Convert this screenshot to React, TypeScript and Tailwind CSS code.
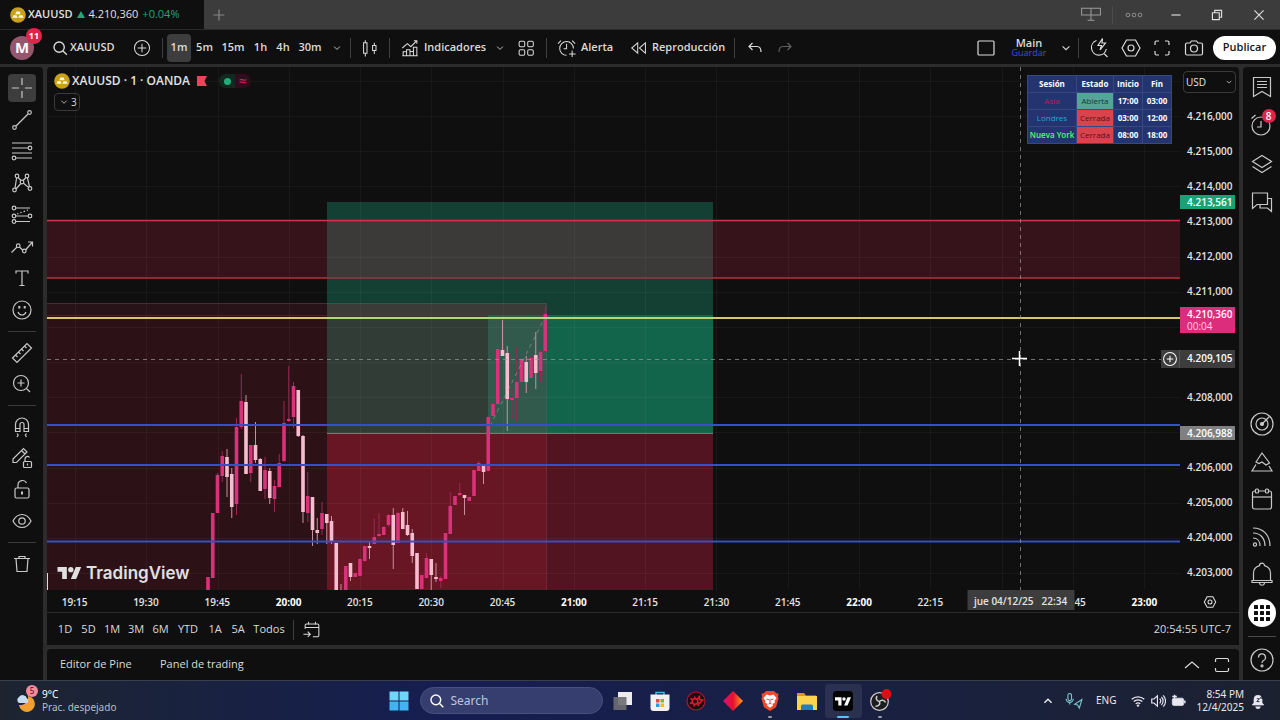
import React from "react";

const PRICE_TOP = 4216;
const PRICE_TOP_Y = 49;
const PX_PER_POINT = 35.15;
const PLOT_W = 1133;
const PLOT_H = 523;

// percentage from the top of the plot for a price
const priceToPct = (price: number) =>
    ((PRICE_TOP_Y + (PRICE_TOP - price) * PX_PER_POINT) / PLOT_H) * 100;

// [up, wick top, body top, body bottom, wick bottom], one per minute
const candles: [number, number, number, number, number][] = [
    [1, 577, 577, 590, 590], [1, 513, 513, 578, 578], [1, 473, 475, 513, 513], [1, 451, 456, 476, 482],
    [0, 449, 457, 477, 497], [0, 468, 474, 507, 518], [1, 418, 427, 504, 515], [1, 374, 401, 427, 429],
    [0, 395, 402, 474, 474], [1, 445, 445, 473, 482], [0, 422, 445, 460, 463], [0, 458, 459, 491, 491],
    [1, 457, 470, 489, 499], [0, 468, 471, 498, 504], [1, 480, 486, 499, 512], [1, 454, 463, 487, 487],
    [1, 401, 423, 461, 462], [1, 366, 419, 421, 422], [1, 382, 386, 417, 428], [0, 390, 390, 436, 437],
    [0, 435, 436, 512, 523], [1, 472, 496, 513, 522], [0, 497, 497, 530, 546], [0, 518, 530, 533, 544],
    [1, 502, 513, 529, 535], [0, 514, 514, 523, 544], [0, 516, 521, 542, 544], [0, 543, 543, 590, 590],
    [0, 584, 590, 590, 590], [1, 566, 566, 590, 590], [0, 563, 563, 577, 581], [1, 573, 573, 577, 577],
    [1, 558, 559, 576, 576], [1, 546, 546, 561, 562], [0, 542, 546, 548, 559], [1, 518, 537, 544, 544],
    [1, 513, 534, 536, 537], [1, 526, 527, 535, 535], [1, 514, 515, 525, 527], [0, 508, 515, 545, 569],
    [1, 512, 513, 543, 543], [0, 508, 512, 529, 529], [0, 511, 525, 535, 536], [0, 529, 533, 556, 563],
    [0, 553, 553, 589, 589], [1, 575, 575, 589, 589], [1, 553, 558, 578, 578], [0, 559, 559, 575, 590],
    [0, 563, 577, 579, 582], [1, 576, 578, 581, 588], [1, 533, 533, 579, 579], [1, 492, 506, 534, 534],
    [1, 496, 496, 505, 505], [1, 483, 493, 495, 496], [0, 495, 495, 498, 515], [1, 497, 497, 501, 501],
    [1, 470, 470, 496, 496], [1, 461, 463, 471, 471], [0, 464, 465, 472, 484], [1, 416, 417, 471, 471],
    [1, 404, 404, 416, 416], [1, 348, 349, 404, 404], [0, 320, 350, 356, 356], [0, 346, 353, 399, 431],
    [1, 388, 398, 400, 419], [1, 347, 382, 398, 422], [1, 347, 359, 382, 387], [0, 356, 362, 382, 393],
    [1, 356, 358, 378, 378], [0, 332, 355, 373, 389], [1, 350, 352, 371, 382], [1, 306, 314, 351, 351],
];

// empty entries are the ticks that sit under the crosshair and price labels
const times = [
    "19:15", "19:30", "19:45", "20:00", "20:15", "20:30", "20:45", "21:00",
    "21:15", "21:30", "21:45", "22:00", "22:15", "", "22:45", "23:00",
];

const prices = [
    "4.216,000", "4.215,000", "4.214,000", "4.213,000", "4.212,000", "4.211,000", "", "",
    "4.208,000", "", "4.206,000", "4.205,000", "4.204,000", "4.203,000",
];

const sessions = [
    { name: "Asia", color: "text-[#b3264f]", open: true, start: "17:00", end: "03:00" },
    { name: "Londres", color: "text-[#22a8d4]", open: false, start: "03:00", end: "12:00" },
    { name: "Nueva York", color: "text-[#4dff6a] font-semibold", open: false, start: "08:00", end: "18:00" },
];

interface IconProps {
    children: React.ReactNode;
    className?: string;
}

const Icon: React.FC<IconProps> = ({ children, className = "size-7" }) => (
    <svg
        viewBox="0 0 28 28"
        fill="none"
        stroke="currentColor"
        strokeWidth="1.2"
        className={`shrink-0 ${className}`}
        aria-hidden="true"
    >
        {children}
    </svg>
);

const Chevron = ({ className = "size-7" }: { className?: string }) => (
    <Icon className={className}>
        <path d="M10 12l4 4 4-4" />
    </Icon>
);

const Divider = () => <div className="h-5 w-px shrink-0 bg-[#404040]" />;

const GoldBadge = () => (
    <svg viewBox="0 0 16 16" className="size-4 shrink-0" aria-hidden="true">
        <circle cx="8" cy="8" r="7.8" fill="#c9a01c" />
        <path d="M6.3 4.6h3.4l1 2.6H5.3zM3.4 8.2h3.3l1 2.6H2.4zM9.3 8.2h3.3l1 2.6H8.3z" fill="#fff6d8" />
    </svg>
);

const TvMark = ({ className }: { className: string }) => (
    <svg viewBox="0 0 36 18" fill="currentColor" className={className} aria-hidden="true">
        <path d="M14 18H7V7H0V0h14zM28 18h-8l7.5-18h8z" />
        <circle cx="20" cy="4" r="4" />
    </svg>
);

const drawingTools: { label: string; icon: React.ReactNode }[][] = [
    [
        { label: "Cruz", icon: <path d="M14 4v7M14 17v7M4 14h7M17 14h7" /> },
        {
            label: "Línea de tendencia",
            icon: <><circle cx="6.5" cy="21.5" r="1.8" /><circle cx="21.5" cy="6.5" r="1.8" /><path d="M8 20L20 8" /></>,
        },
        {
            label: "Retroceso de Fibonacci",
            icon: <><path d="M4 6h20M4 11h16M4 16h20M8 21h16" /><circle cx="22" cy="11" r="1.8" /><circle cx="6" cy="21" r="1.8" /></>,
        },
        {
            label: "Patrón XABCD",
            icon: <><circle cx="6.5" cy="21" r="1.8" /><circle cx="9" cy="7" r="1.8" /><circle cx="14" cy="13" r="1.8" /><circle cx="19" cy="7" r="1.8" /><circle cx="22" cy="19.5" r="1.8" /><path d="M7 19L8.6 9M10.2 8.5l2.6 3M15.2 11.5l2.7-3M19.5 9l2 8.7M8 20l4.8-5.5M15.5 14.2l5 4.2" /></>,
        },
        {
            label: "Posición y previsión",
            icon: <><circle cx="6" cy="7" r="1.8" /><path d="M8 7h14M8 15h12M8 20.5h14" /><circle cx="6" cy="15" r="1.8" /><circle cx="22" cy="15" r="1.8" /><circle cx="6" cy="20.5" r="1.8" /><path d="M9 13l11-4" strokeDasharray="1.5 2" /></>,
        },
        {
            label: "Formas",
            icon: <><path d="M3.5 19.5l5.5-5.5M11.5 14l3.5 3.5M17.5 17l7-8M20 9h4.5v4.5" /><circle cx="10.2" cy="12.7" r="1.8" /><circle cx="16.3" cy="18" r="1.8" /></>,
        },
        { label: "Texto", icon: <path d="M8 9.5V7h12v2.5M14 7v14M11.5 21.5h5" /> },
        {
            label: "Iconos",
            icon: <><circle cx="14" cy="14" r="9" /><path d="M10 16c.8 2 2.2 3 4 3s3.2-1 4-3" /><path d="M11.3 10v2.5M16.7 10v2.5" strokeWidth="2" /></>,
        },
    ],
    [
        {
            label: "Medida",
            icon: <path d="M4.5 19L19 4.5l4.5 4.5L9 23.5zM7.5 16l2 2M10.5 13l2 2M13.5 10l2 2M16.5 7l2 2" />,
        },
        {
            label: "Acercar",
            icon: <><circle cx="13" cy="13" r="7.5" /><path d="M13 9.5v7M9.500 13h7M18.5 18.5l3.500 3.500" /></>,
        },
    ],
    [
        {
            label: "Imán",
            icon: <path d="M7.5 18.5v-7a6.5 6.5 0 0 1 13 0v7H16v-7a2 2 0 0 0-4 0v7zM7.5 15.500H12M16 15.500h4.500M9 20.5l1.2 1.5L9 24M18.5 20.5L17.300 22l1.200 2" />,
        },
        {
            label: "Modo dibujo",
            icon: <><path d="M5 15L15.5 4.5 19 8 8.500 18.500H5zM13.500 6.500L17 10" /><rect x="15.5" y="17.5" width="8" height="6" rx="1" /><path d="M17 17.500V15a2.500 2.500 0 0 1 4.500-1.500M19.500 19.500v2" /></>,
        },
        {
            label: "Bloquear",
            icon: <><rect x="7" y="12" width="14" height="10" rx="1.5" /><path d="M10 12V9a4.500 4.500 0 0 1 8.500-2" /><path d="M14 15.500v3" strokeWidth="2" /></>,
        },
        {
            label: "Ocultar",
            icon: <><path d="M5 14c2-4 5.500-6.500 9-6.500s7 2.500 9 6.500c-2 4-5.500 6.500-9 6.500S7 18 5 14z" /><circle cx="14" cy="14" r="3.2" /></>,
        },
    ],
    [
        {
            label: "Eliminar",
            icon: <path d="M6 8.500h16M11 8.500v-2h6v2M8 8.500l1 13h10l1-13" />,
        },
    ],
];

const groupHeights = ["h-[250px]", "h-[59px]", "h-[122px]", "h-7"];

const LeftToolbar = () => (
    <nav className="flex w-[43px] shrink-0 flex-col items-center rounded-tr bg-[#0f0f0f] pt-[7px] text-[#c8c8c8]">
        {drawingTools.map((group, g) => (
            <React.Fragment key={g}>
                {g > 0 && <div className="my-[7px] h-px w-7 shrink-0 bg-[#3a3a3a]" />}
                <div className={`flex flex-col justify-between ${groupHeights[g]}`}>
                    {group.map((tool, i) => (
                        <button
                            key={tool.label}
                            aria-label={tool.label}
                            className={`flex size-7 items-center justify-center rounded ${g === 0 && i === 0 ? "bg-[#3d3d3d]" : ""}`}
                        >
                            <Icon>{tool.icon}</Icon>
                        </button>
                    ))}
                </div>
            </React.Fragment>
        ))}
    </nav>
);

const RailButton = ({ label, children, badge }: { label: string; children: React.ReactNode; badge?: string }) => (
    <button aria-label={label} className="relative flex size-8 items-center justify-center">
        <Icon>{children}</Icon>
        {badge && (
            <span className="absolute top-0 right-0.5 flex size-3.5 items-center justify-center rounded-full bg-[#e0244c] text-[10px] font-semibold text-white">
                {badge}
            </span>
        )}
    </button>
);

const RightRail = () => (
    <aside className="flex w-[37px] shrink-0 flex-col items-center rounded-tl bg-[#0f0f0f] pt-1 pb-1 text-[#c8c8c8]">
        <div className="flex h-[147px] flex-col justify-between">
            <RailButton label="Lista de seguimiento">
                <path d="M5.5 4.5h17v19L14 18.500l-8.500 5zM9 8.500h10M9 11.500h10M9 14.500h10" />
            </RailButton>
            <RailButton label="Alertas" badge="8">
                <circle cx="13" cy="15" r="9" /><path d="M13 10v6H9M3.500 7.500l4-3.500" />
            </RailButton>
            <RailButton label="Árbol de objetos">
                <path d="M14 5.500l9.500 6-9.500 6-9.500-6zM4.500 16.500l9.500 6 9.500-6" />
            </RailButton>
            <RailButton label="Chats">
                <path d="M4.500 5h15v11.500H9l-4.500 4zM19.500 10.500h4v13L19.500 20H12v-3.500" />
            </RailButton>
        </div>
        <div className="flex-1" />
        <div className="flex h-[221px] flex-col justify-between">
            <RailButton label="Filtros">
                <circle cx="14" cy="14" r="11" /><circle cx="14" cy="14" r="6" /><circle cx="14" cy="14" r="1.500" fill="currentColor" /><path d="M14 14l7.500-7.500" />
            </RailButton>
            <RailButton label="Pine">
                <path d="M8 14L14 5l7.500 10-3.500 2-4-3-3 1.500zM8 16.500L4 23h20l-3-5" />
            </RailButton>
            <RailButton label="Calendario">
                <rect x="4.5" y="5" width="19" height="18" rx="2" /><path d="M4.500 11h19" /><rect x="7.5" y="3" width="3" height="4" rx="1" fill="#0f0f0f" /><rect x="17.5" y="3" width="3" height="4" rx="1" fill="#0f0f0f" />
            </RailButton>
            <RailButton label="Noticias">
                <path d="M5 5c10 0 17 7 17 18M5 10c7 0 12 5 12 13M5 15c4 0 7 3 7 8" /><circle cx="7" cy="21.5" r="1.6" />
            </RailButton>
            <RailButton label="Notificaciones">
                <path d="M4 21.500h20v-2h-1.500v-7a8 8 0 0 0-6-7.800 2.500 2.500 0 0 0-5 0 8 8 0 0 0-6 7.800v7H4zM5.500 19.500h17M11.500 22c.5 3 4.500 3 5 0" />
            </RailButton>
            <button aria-label="Productos" className="grid size-8 place-items-center">
                <span className="grid size-7 shrink-0 place-items-center rounded-full bg-white">
                    <svg viewBox="0 0 16 16" className="size-4" aria-hidden="true">
                        {[0, 6, 12].map((y) => [0, 6, 12].map((x) => (
                            <rect key={`${x}-${y}`} x={x} y={y} width="4" height="4" rx="0.6" fill="#0f0f0f" />
                        )))}
                    </svg>
                </span>
            </button>
        </div>
        <div className="my-[7px] h-px w-7 bg-[#4a4a4a]" />
        <RailButton label="Ayuda">
            <circle cx="14" cy="14" r="11" /><path d="M10.500 11.500a3.500 3.500 0 1 1 5 3c-1 .6-1.500 1-1.500 2.500" /><circle cx="14" cy="19.8" r="1" />
        </RailButton>
    </aside>
);

const TitleBar = () => (
    <div className="flex h-[29px] shrink-0 bg-[#3c3c3c] text-[#c0c0c0]">
        <div className="flex w-[204px] items-center bg-[#0f0f0f] pl-2.5 text-[11px] whitespace-nowrap text-[#e0e0e0]">
            <GoldBadge />
            <span className="ml-0.5 font-semibold">XAUUSD</span>
            <span className="ml-1 h-0 w-0 border-x-4 border-b-[7px] border-x-transparent border-b-[#22a67a]" />
            <span className="ml-1">4.210,360</span>
            <span className="ml-1 text-[#22a67a]">+0.04%</span>
        </div>
        <button aria-label="Nueva pestaña" className="w-[29px] text-[#8a8a8a]">
            <Icon className="mx-auto size-4"><path d="M14 4.500v19M4.500 14h19" strokeWidth="2" /></Icon>
        </button>
        <div className="flex-1" />
        <button aria-label="Ventanas" className="w-[42px] text-[#9a9a9a]">
            <Icon className="mx-auto size-6"><path d="M3 6h22v8H3zM14 6v14M10 20h8" /></Icon>
        </button>
        <div className="mt-1.5 h-[18px] w-px bg-[#4c4c4c]" />
        <button aria-label="Más" className="w-[42px] text-[#9a9a9a]">
            <Icon className="mx-auto size-5"><circle cx="5.5" cy="14" r="2.6" /><circle cx="14" cy="14" r="2.6" /><circle cx="22.5" cy="14" r="2.6" /></Icon>
        </button>
        <button aria-label="Minimizar" className="w-[41px] text-[#e0e0e0]">
            <Icon className="mx-auto size-4"><path d="M6 14h16" strokeWidth="2" /></Icon>
        </button>
        <button aria-label="Restaurar" className="w-[42px] text-[#e0e0e0]">
            <Icon className="mx-auto size-4"><path d="M6 10h12v12H6zM10 10V6h12v12h-4" strokeWidth="2" /></Icon>
        </button>
        <button aria-label="Cerrar" className="w-[42px] text-[#e0e0e0]">
            <Icon className="mx-auto size-4"><path d="M6 6l16 16M22 6L6 22" strokeWidth="2" /></Icon>
        </button>
    </div>
);

const TopToolbar = () => (
    <header className="flex h-[35px] shrink-0 items-center border-t border-[#2a2a2a] bg-[#0f0f0f] pt-px text-[11px] font-semibold whitespace-nowrap text-[#dbdbdb]">
        <button aria-label="Menú de usuario" className="relative ml-2.5 flex size-6 items-center justify-center rounded-full bg-[#96566e] text-[15px] font-bold text-white">
            M
            <span className="absolute -top-2 left-4 flex size-4 items-center justify-center rounded-full bg-[#e0244c] text-[9px]">11</span>
        </button>
        <button className="ml-3.5 flex w-[72px] items-center">
            <Icon className="size-6"><circle cx="13" cy="13" r="6" strokeWidth="1.6" /><path d="M17.500 17.500L22 22" strokeWidth="1.6" /></Icon>
            <span className="-ml-0.5">XAUUSD</span>
        </button>
        <button aria-label="Comparar" className="mr-1.5 ml-2 flex w-7 justify-center">
            <Icon className="size-6"><circle cx="14" cy="14" r="8.8" /><path d="M14 9v10M9 14h10" /></Icon>
        </button>
        <Divider />
        <div className="ml-1 flex items-center">
            <button className="h-7 w-6 rounded bg-[#3d3d3d]">1m</button>
            <button className="h-7 w-[27px]">5m</button>
            <button className="h-7 w-[30px]">15m</button>
            <button className="h-7 w-[25px]">1h</button>
            <button className="h-7 w-5">4h</button>
            <button className="h-7 w-[34px]">30m</button>
            <button aria-label="Intervalos" className="w-5"><Chevron className="mx-auto size-5" /></button>
        </div>
        <div className="ml-[3px]"><Divider /></div>
        <button aria-label="Velas" className="flex w-[38px] justify-center">
            <Icon className="size-6"><path d="M6.500 8h4v12h-4zM8.500 5v3M8.500 20v4M17 11h4v6h-4zM19 8v3M19 17v4" /></Icon>
        </button>
        <Divider />
        <button className="ml-2 flex items-center gap-0.5">
            <Icon className="size-6"><path d="M6 23v-4.500h4V23zM10 23v-7h4v7M14 23v-5h4v5M18 23V13h4v10M5 23h18M5 14l6-5 4 3.500 7-7M18.500 5.500H22V9" /></Icon>
            <span className="w-[62px] text-left">Indicadores</span>
        </button>
        <button aria-label="Favoritos" className="ml-1"><Chevron className="size-5" /></button>
        <button aria-label="Plantillas" className="ml-1">
            <Icon className="size-6"><rect x="6" y="6" width="6.5" height="6.5" rx="1.5" /><rect x="16" y="6" width="6.5" height="6.5" rx="1.5" /><rect x="6" y="16" width="6.5" height="6.5" rx="1.5" /><rect x="16" y="16" width="6.5" height="6.5" rx="1.5" /></Icon>
        </button>
        <div className="mr-2 ml-2"><Divider /></div>
        <button className="flex items-center gap-0.5">
            <Icon className="size-6"><path d="M21.500 14.500a8 8 0 1 0-8 8M13.500 9v6H10M3.500 9L7 5.500M20 5.500L23.500 9M20 17v7.500M16.500 21h7.500" /></Icon>
            <span className="w-[34px] text-left">Alerta</span>
        </button>
        <button className="ml-3 flex items-center gap-px">
            <Icon className="size-6"><path d="M12.500 8v12l-7-6zM21.500 8v12l-7-6z" /></Icon>
            <span className="w-[74px] text-left">Reproducción</span>
        </button>
        <div className="ml-2"><Divider /></div>
        <button aria-label="Deshacer" className="ml-1.5"><Icon><path d="M11.500 9L8 12.500l3.500 3.500M8.500 12.500H16c2.500 0 4 2 4 5.500" /></Icon></button>
        <button aria-label="Rehacer" className="ml-0.5 text-[#606060]"><Icon><path d="M16.500 9l3.500 3.500-3.500 3.500M19.500 12.500H12c-2.500 0-4 2-4 5.500" /></Icon></button>
        <div className="flex-1" />
        <button aria-label="Diseño"><Icon><rect x="6" y="7" width="16" height="14" rx="1" /></Icon></button>
        <button className="ml-1 flex w-[50px] flex-col items-center">
            <span className="leading-[11px]">Main</span>
            <span className="text-[9px] leading-[10px] font-normal text-[#3350f0]">Guardar</span>
        </button>
        <button aria-label="Administrar diseños"><Chevron className="size-6" /></button>
        <Divider />
        <button aria-label="Búsqueda rápida" className="ml-1.5">
            <Icon><path d="M11.500 6.500a7.500 7.500 0 1 0 9.800 8.500M19 19.500l3.500 3.500M17.500 4.500l-4.500 7h3.500L15 16l5.500-7H17z" /></Icon>
        </button>
        <button aria-label="Ajustes" className="ml-1">
            <Icon><path d="M9.500 6h9l4.500 8-4.500 8h-9L5 14z" /><circle cx="14" cy="14" r="3" /></Icon>
        </button>
        <button aria-label="Pantalla completa" className="ml-[3px]">
            <Icon><path d="M7 11V8.500A1.500 1.500 0 0 1 8.500 7H11M17 7h2.500A1.500 1.500 0 0 1 21 8.500V11M21 17v2.500a1.500 1.500 0 0 1-1.500 1.500H17M11 21H8.500A1.500 1.500 0 0 1 7 19.500V17" /></Icon>
        </button>
        <button aria-label="Instantánea" className="ml-1">
            <Icon><path d="M7 9h3l1.500-2h5L18 9h3a1.500 1.500 0 0 1 1.500 1.500v9A1.500 1.500 0 0 1 21 21H7a1.500 1.500 0 0 1-1.500-1.500v-9A1.500 1.500 0 0 1 7 9z" /><circle cx="14" cy="14.500" r="3.500" /></Icon>
        </button>
        <button className="mr-1 ml-[5px] h-6 w-[63px] rounded-full bg-white text-[#151515]">Publicar</button>
    </header>
);

const Plot = () => (
    <svg
        viewBox={`47 67 ${PLOT_W} ${PLOT_H}`}
        preserveAspectRatio="none"
        className="absolute inset-0 size-full"
        aria-hidden="true"
    >
        {/* zones */}
        <rect x="47" y="220" width="1133" height="58" fill="#36121a" />
        <rect x="47" y="303" width="280" height="12" fill="#281318" />
        <rect x="47" y="315" width="280" height="275" fill="#2c1217" />
        <rect x="327" y="202" width="386" height="231" fill="#134032" />
        <rect x="327" y="220" width="386" height="58" fill="#3b3a38" />
        <rect x="327" y="303" width="219" height="12" fill="#3b3b38" />
        <rect x="327" y="315" width="161" height="118" fill="#303c35" />
        <rect x="488" y="315" width="58" height="118" fill="#325a4c" />
        <rect x="546" y="315" width="167" height="118" fill="#12644b" />
        <rect x="327" y="433" width="219" height="157" fill="#681623" />
        <rect x="546" y="433" width="167" height="157" fill="#521420" />

        {/* grid */}
        <g stroke="#ffffff" strokeOpacity="0.04">
            {times.map((_, i) => (
                <path key={i} d={`M${Math.round(75 + i * 71.27) + 0.5} 67v523`} />
            ))}
            {prices.map((_, i) => (
                <path key={i} d={`M47 ${Math.round(116 + i * PX_PER_POINT) + 0.5}h1133`} />
            ))}
            <path d="M47 81.500h1133" />
        </g>
        <path d="M47 303.500h499.500V590" fill="none" stroke="#8a5a66" strokeOpacity="0.35" />
        <path d="M47 315.500h499" stroke="#7a2a45" strokeOpacity="0.4" />
        <path d="M327 433.500h386" stroke="#8f9a90" strokeOpacity="0.7" />

        <path d="M47 220.500h1133" stroke="#cf3148" strokeWidth="1.5" />
        <path d="M47 278h1133" stroke="#b8323f" strokeWidth="1.5" />
        <path d="M327 278h386" stroke="#7a3a3c" strokeWidth="2" />

        {candles.map(([up, wickTop, top, bottom, wickBottom], i) => {
            const x = 208 + i * 4.75;
            return (
                <g key={i}>
                    <rect x={x - 0.5} y={wickTop} width="1" height={wickBottom - wickTop} fill={up ? "#9c2457" : "#c78f9f"} />
                    <rect x={x - 1.8} y={top} width="3.6" height={bottom - top} fill={up ? "#d9317a" : "#f8bcd0"} />
                </g>
            );
        })}
        <rect x="47" y="573" width="1" height="17" fill="#f8d0dc" />
        <path d="M490 426l55-109" stroke="#9fb0a6" strokeOpacity="0.5" strokeDasharray="4 4" />

        {/* levels */}
        <path d="M47 318h1133" stroke="#d8c76a" strokeWidth="2" />
        <path d="M327 318h386" stroke="#b2d872" strokeWidth="2" />
        <path d="M47 425h1133M47 465h1133M47 541.500h1133" stroke="#3450c4" strokeWidth="2" />

        {/* crosshair */}
        <g stroke="#9a9a9a" strokeOpacity="0.7" strokeDasharray="4 4">
            <path d="M47 359.500h1115" />
            <path d="M1020.500 67v523" />
        </g>
        <path d="M1012 358.500h15M1019.500 351v15" stroke="#ffffff" strokeWidth="1.5" />
    </svg>
);

const SessionTable = () => (
    <table className="absolute top-2 right-2 w-36 table-fixed border-collapse text-center text-[8px] leading-4 text-white">
        <colgroup>
            <col className="w-[49px]" />
            <col className="w-[37px]" />
            <col className="w-[29px]" />
            <col className="w-[29px]" />
        </colgroup>
        <thead>
            <tr className="bg-[#233470]">
                {["Sesión", "Estado", "Inicio", "Fin"].map((h) => (
                    <th key={h} className="border border-[#37477f] p-0 font-bold">{h}</th>
                ))}
            </tr>
        </thead>
        <tbody>
            {sessions.map((s) => (
                <tr key={s.name} className="bg-[#233470]">
                    <td className={`border border-[#37477f] p-0 whitespace-nowrap ${s.color}`}>{s.name}</td>
                    <td className={`border border-[#37477f] p-0 ${s.open ? "bg-[#52a598] text-[#163a36]" : "bg-[#d8434c] text-[#5a1018]"}`}>
                        {s.open ? "Abierta" : "Cerrada"}
                    </td>
                    <td className="border border-[#37477f] p-0 font-bold">{s.start}</td>
                    <td className="border border-[#37477f] p-0 font-bold">{s.end}</td>
                </tr>
            ))}
        </tbody>
    </table>
);

const Legend = () => (
    <div className="relative pt-1.5 pl-[7px]">
        <div className="flex h-4 items-center text-xs font-semibold text-[#e4e4e4]">
            <GoldBadge />
            <span className="ml-0.5 w-[121px] whitespace-nowrap">XAUUSD · 1 · OANDA</span>
            <svg viewBox="0 0 10 10" className="ml-1 size-2.5" aria-hidden="true">
                <path d="M0 0h10L7.500 5 10 10H0z" fill="#f0415c" />
            </svg>
            <span className="ml-3 flex h-3.5 w-4 items-center justify-center rounded-l-full bg-[#12291f]">
                <span className="size-[7px] rounded-full bg-[#22ab7c]" />
            </span>
            <span className="flex h-3.5 w-4 items-center justify-center rounded-r-full bg-[#300d1c] text-sm leading-3 text-[#c2245c]">≈</span>
        </div>
        <button className="mt-1 flex h-[18px] w-[26px] items-center rounded-sm border border-[#3a3a3a] text-[10px] text-[#dbdbdb]">
            <Chevron className="-mr-0.5 size-[18px]" />
            3
        </button>
    </div>
);

const PriceAxis = () => (
    <div className="relative w-[59px] shrink-0 text-[10px] font-semibold text-[#e4e4e4]">
        <div className="flex h-full flex-col pt-8">
            {prices.map((p, i) => (
                <div key={i} className="flex flex-1 items-center pl-[7px]">{p}</div>
            ))}
        </div>
        <select
            aria-label="Moneda"
            className="absolute top-1 left-[3px] h-[22px] w-[53px] appearance-none rounded border border-[#3a3a3a] bg-transparent pl-0.5 font-normal"
            defaultValue="USD"
        >
            <option>USD</option>
        </select>
        <Chevron className="pointer-events-none absolute top-[7px] right-0.5 size-4" />
        <div
            className="absolute left-0 h-3.5 w-[55px] -translate-y-1/2 bg-[#17a376] pl-[7px] leading-[14px] text-white"
            style={{ top: `${priceToPct(4213.561)}%` }}
        >
            4.213,561
        </div>
        <div
            className="absolute left-0 -mt-[7px] h-[26px] w-[55px] bg-[#dc2d7c] pt-px pl-[7px] leading-3 text-white"
            style={{ top: `${priceToPct(4210.36)}%` }}
        >
            4.210,360
            <div className="font-normal text-[#ffd5e6]">00:04</div>
        </div>
        <div
            className="absolute left-[-19px] flex h-[18px] w-[74px] -translate-y-1/2 items-center bg-[#3d3d3d] text-white"
            style={{ top: `${priceToPct(4209.09)}%` }}
        >
            <button aria-label="Añadir en este precio" className="flex h-full w-[19px] items-center justify-center border-r border-[#555555]">
                <Icon className="size-[18px]"><circle cx="14" cy="14" r="10" strokeWidth="1.6" /><path d="M14 9v10M9 14h10" strokeWidth="1.6" /></Icon>
            </button>
            <span className="pl-[7px]">4.209,105</span>
        </div>
        <div
            className="absolute left-0 h-3.5 w-[55px] -translate-y-1/2 bg-[#808080] pl-[7px] leading-[14px] text-white"
            style={{ top: `${priceToPct(4206.988)}%` }}
        >
            4.206,988
        </div>
    </div>
);

const TimeAxis = () => (
    <div className="flex h-[22px] shrink-0 text-[10px] text-[#e4e4e4]">
        <div className="relative flex flex-1">
            <div className="-ml-2 flex flex-1 pt-0.5">
                {times.map((t, i) => (
                    <span
                        key={i}
                        className={`flex flex-1 items-center justify-center ${t.endsWith(":00") ? "font-bold text-white" : "font-semibold"}`}
                    >
                        {t}
                    </span>
                ))}
            </div>
            <div
                className="absolute top-0 flex h-5 w-[107px] -translate-x-1/2 items-center justify-center gap-2 bg-[#3d3d3d] pt-0.5 font-semibold whitespace-nowrap"
                style={{ left: `${(973.5 / PLOT_W) * 100}%` }}
            >
                <span>jue 04/12/25</span>
                <span>22:34</span>
            </div>
        </div>
        <button aria-label="Ajustes del eje" className="flex w-[59px] items-center justify-center pt-0.5">
            <Icon className="size-4"><path d="M9 5h10l5 9-5 9H9l-5-9z" strokeWidth="1.8" /><circle cx="14" cy="14" r="3.5" strokeWidth="1.8" /></Icon>
        </button>
    </div>
);

const ranges = [
    { label: "1D", width: "w-6" },
    { label: "5D", width: "w-[23px]" },
    { label: "1M", width: "w-6" },
    { label: "3M", width: "w-6" },
    { label: "6M", width: "w-[25px]" },
    { label: "YTD", width: "w-[30px]" },
    { label: "1A", width: "w-6" },
    { label: "5A", width: "w-[22px]" },
    { label: "Todos", width: "w-10" },
];

const RangeBar = () => (
    <div className="flex h-[33px] shrink-0 items-center border-t border-[#2a2a2a] pt-px pr-2 pl-1.5 text-[11px] font-medium whitespace-nowrap text-[#dbdbdb]">
        {ranges.map((r) => (
            <button key={r.label} className={`flex justify-center ${r.width}`}>{r.label}</button>
        ))}
        <div className="mr-1.5 ml-1"><Divider /></div>
        <button aria-label="Ir a">
            <Icon className="size-6"><path d="M6 12.500v-4A1.500 1.500 0 0 1 7.500 7h13A1.500 1.500 0 0 1 22 8.500v12a1.500 1.500 0 0 1-1.500 1.500H15M6 11h16M10 4.500V8M18 4.500V8M4 19h8M9 16l3 3-3 3" /></Icon>
        </button>
        <span className="ml-auto">20:54:55 UTC-7</span>
    </div>
);

const BottomPanel = () => (
    <div className="flex h-[31px] shrink-0 items-center rounded-t bg-[#0f0f0f] pr-[3px] pl-[13px] text-[11px] font-medium whitespace-nowrap text-[#dbdbdb]">
        <button className="w-[100px] text-left">Editor de Pine</button>
        <button>Panel de trading</button>
        <div className="flex-1" />
        <button aria-label="Abrir panel"><Icon><path d="M7 17l7-6 7 6" /></Icon></button>
        <button aria-label="Maximizar panel" className="ml-0.5"><Icon><path d="M7.500 11V9A1.500 1.500 0 0 1 9 7.500h10A1.500 1.500 0 0 1 20.500 9v2M7.500 17v2A1.500 1.500 0 0 0 9 20.500h10a1.500 1.500 0 0 0 1.500-1.500v-2" /></Icon></button>
    </div>
);

const TaskIcon = ({ label, children, state }: { label: string; children: React.ReactNode; state?: "open" | "active" }) => (
    <button
        aria-label={label}
        className={`relative flex h-[34px] flex-1 items-center justify-center rounded ${state === "active" ? "bg-white/8" : ""}`}
    >
        <svg viewBox="0 0 20 20" className="size-5 overflow-visible" aria-hidden="true">{children}</svg>
        {state && (
            <span className={`absolute bottom-0 h-0.5 rounded-full ${state === "active" ? "w-3 bg-[#5cc3f2]" : "w-1 bg-[#9a9aa6]"}`} />
        )}
    </button>
);

const Taskbar = () => (
    <footer className="grid h-10 shrink-0 grid-cols-[1fr_auto_1fr] items-center border-t border-[#3a3f4c] bg-linear-to-r from-[#1d2430] via-[#161d52] via-35% to-[#1c2130] font-['Noto_Sans',sans-serif] text-[10px] text-[#e8e8f0]">
        <button className="flex items-center pl-3.5 text-left leading-[13px]">
            <span className="relative mr-1">
                <svg viewBox="0 0 24 24" className="size-6" aria-hidden="true">
                    <path d="M14 7a8 8 0 1 1-9 9 8 8 0 0 0 9-9z" fill="#f0a032" />
                    <path d="M5 14a3.500 3.500 0 0 1 0-6 4.500 4.500 0 0 1 8 1.500 2.500 2.500 0 0 1 0 4.500z" fill="#c5dcf5" />
                </svg>
                <span className="absolute -top-1 right-0 flex size-3 items-center justify-center rounded-full bg-[#f88a9c] text-[8px] text-[#3a1018]">5</span>
            </span>
            <span>
                <span className="block text-white">9°C</span>
                <span className="block text-[#b8bcc8]">Prac. despejado</span>
            </span>
        </button>
        <div className="flex items-center">
            <button aria-label="Inicio" className="flex w-[34px] justify-center">
                <svg viewBox="0 0 20 20" className="size-5" aria-hidden="true">
                    <path d="M.5.5h9v9h-9zM10.500.5h9v9h-9z" fill="#6fd6fa" />
                    <path d="M.5 10.500h9v9h-9zM10.500 10.500h9v9h-9z" fill="#42b4f4" />
                </svg>
            </button>
            <label className="mr-0.5 ml-1 flex h-[27px] w-[183px] items-center rounded-full border border-[#48507e] bg-[#363e70] pl-2 text-xs">
                <Icon className="size-4 text-white"><circle cx="12" cy="12" r="8.5" strokeWidth="2.5" /><path d="M18.500 18.500L25 25" strokeWidth="2.5" /></Icon>
                <input
                    aria-label="Search"
                    placeholder="Search"
                    className="ml-1.5 w-28 bg-transparent outline-none placeholder:text-[#c0c4dc]"
                />
            </label>
            <div className="flex w-[294px]">
                <TaskIcon label="Vista de tareas">
                    <rect x="5" y="1" width="14" height="13" fill="#ececec" />
                    <rect x="0.5" y="6" width="13" height="13" fill="#6e6e72" fillOpacity="0.9" />
                </TaskIcon>
                <TaskIcon label="Microsoft Store">
                    <path d="M6 4V1.500h8V4" fill="none" stroke="#4ab4e8" strokeWidth="1.5" />
                    <path d="M.5 3.500h19V17a3 3 0 0 1-3 3h-13a3 3 0 0 1-3-3z" fill="#f1f1f1" />
                    <path d="M6 8h3.500v3.500H6z" fill="#e8502c" /><path d="M10.500 8H14v3.500h-3.500z" fill="#7cb82c" />
                    <path d="M6 12.500h3.500V16H6z" fill="#2a9fe0" /><path d="M10.500 12.500H14V16h-3.500z" fill="#f0b82c" />
                </TaskIcon>
                <TaskIcon label="Red">
                    <circle cx="10" cy="10" r="9" fill="#1c0c12" stroke="#b81428" strokeWidth="1.2" />
                    <path d="M9 7.500L8.500 5.500M6.500 8.500l-2-1M6 11.500l-2 1M8.500 13.500l-.5 2M11.500 13l1.500 2" stroke="#e01c30" strokeWidth="1.5" />
                    <circle cx="9" cy="10.5" r="2.8" fill="none" stroke="#e01c30" strokeWidth="1.5" />
                    <path d="M11 8.500l2.500-3v3l3 .5-3 3.500-1.500-1" fill="none" stroke="#e01c30" strokeWidth="1.5" />
                </TaskIcon>
                <TaskIcon label="Rombo">
                    <defs>
                        <linearGradient id="rhomb"><stop offset="0" stopColor="#d8107c" /><stop offset="0.5" stopColor="#e8102c" /><stop offset="1" stopColor="#ffa020" /></linearGradient>
                    </defs>
                    <path d="M10 0l10 10-10 10L0 10z" fill="url(#rhomb)" />
                </TaskIcon>
                <TaskIcon label="Brave" state="open">
                    <path d="M6 0h8l2 2 2.500.8-.5 3 .5 2L16 16.300 10 20l-6-3.700L1.500 7.800l.5-2-.5-3L4 2z" fill="#f0492a" />
                    <path d="M10 4.500l3.500-1 3 3.500-2 3 .5 1.500-2.500 1.500.5 1.500-3 2.200-3-2.200.5-1.500L5 11.500l.5-1.500-2-3 3-3.500z" fill="#fff" />
                    <path d="M6.500 8l2.500.8M13.500 8l-2.500.8M10 8v4l-1.500 1M10 12l1.500 1" stroke="#f0492a" fill="none" />
                </TaskIcon>
                <TaskIcon label="Explorador de archivos">
                    <path d="M0 2h7l2 2.500h10V8H0z" fill="#d99a1c" />
                    <path d="M0 5h20v14H0z" fill="#fbd34e" />
                    <path d="M4 19v-4a1.500 1.500 0 0 1 1.500-1.500h9A1.500 1.500 0 0 1 16 15v4z" fill="#1f7fc4" />
                </TaskIcon>
                <TaskIcon label="TradingView" state="active">
                    <rect width="20" height="20" rx="3.5" fill="#050505" />
                    <path d="M8.500 14.500H5.300v-5H2V6.300h6.500zM14.500 14.500h-3.400l3.400-8.200H18z" fill="#fff" />
                    <circle cx="11" cy="8" r="1.7" fill="#fff" />
                </TaskIcon>
                <TaskIcon label="OBS" state="open">
                    <circle cx="9.5" cy="10.5" r="8.8" fill="#1d1d20" stroke="#d0d0d0" strokeWidth="1.2" />
                    <path d="M9.500 10.500c-3-.5-4-3-2.500-5.500M9.500 10.500c2-2.300 5-1.500 6 1M9.500 10.500c1 3-1 5-4 4.800" fill="none" stroke="#d0d0d0" strokeWidth="1.5" />
                    <circle cx="16.5" cy="3" r="5" fill="#e00c14" />
                </TaskIcon>
            </div>
        </div>
        <div className="flex items-center justify-end pr-3.5 whitespace-nowrap">
            <button aria-label="Iconos ocultos"><Icon className="size-5"><path d="M9 16.500l5-5 5 5" strokeWidth="2" /></Icon></button>
            <button aria-label="Micrófono y ubicación" className="ml-1.5 w-5 text-[#7cc4cc]">
                <Icon className="size-5"><path d="M5.500 6a2.500 2.500 0 0 1 5 0v5a2.500 2.500 0 0 1-5 0zM3 11a5 5 0 0 0 10 0M8 16v3M15 18.500L25 12l-3.500 12-2.500-4.500z" strokeWidth="1.6" /></Icon>
            </button>
            <span className="ml-3 w-5">ENG</span>
            <button aria-label="Red, sonido y batería" className="ml-3.5 flex gap-1">
                <Icon className="size-4"><path d="M3 11a16 16 0 0 1 22 0M6.500 15a11 11 0 0 1 15 0M10 19a6 6 0 0 1 8 0" strokeWidth="2.2" /><circle cx="14" cy="22" r="1.5" fill="currentColor" /></Icon>
                <Icon className="size-4"><path d="M3 10.500h4L13 5v18l-6-5.500H3zM17 10a6 6 0 0 1 0 8M20 7a10 10 0 0 1 0 14M23 4a14 14 0 0 1 0 20" strokeWidth="2" /></Icon>
                <Icon className="size-4"><rect x="4" y="9" width="20" height="13" rx="3" fill="currentColor" /><path d="M26 13v5M8 3v6M4 6h8" strokeWidth="2.5" /></Icon>
            </button>
            <span className="ml-1 w-[54px] text-right leading-[13px]">8:54 PM<br />12/4/2025</span>
            <button aria-label="Notificaciones de Windows" className="ml-1.5">
                <Icon className="size-4"><path d="M4 21l3-4v-6a7 7 0 0 1 14 0v6l3 4zM10 23.500a4 4 0 0 0 8 0" fill="currentColor" /><path d="M12 10h4.500L12 15h4.500M18 3h5l-5 6h5" stroke="#1c2130" strokeWidth="1.6" /></Icon>
            </button>
        </div>
    </footer>
);

const App: React.FC = () => {
    return (
        <div className="flex h-screen min-h-[640px] w-full flex-col overflow-hidden bg-[#2c2c2c] font-['Open_Sans','Noto_Sans',sans-serif]">
            <TitleBar />
            <TopToolbar />
            <div className="mt-[3px] flex min-h-0 flex-1">
                <LeftToolbar />
                <main className="mx-1 flex min-w-0 flex-1 flex-col">
                    <section className="flex min-h-0 flex-1 flex-col rounded-t bg-[#0f0f0f]">
                        <div className="flex min-h-0 flex-1">
                            <div className="relative min-w-0 flex-1">
                                <Plot />
                                <Legend />
                                <SessionTable />
                                <div className="absolute bottom-1.5 left-2.5 flex items-center gap-1 text-[#e0e0e0]">
                                    <TvMark className="h-3 w-[25px]" />
                                    <span className="font-['Inter',sans-serif] text-[17px] leading-[22px] font-semibold">TradingView</span>
                                </div>
                            </div>
                            <PriceAxis />
                        </div>
                        <TimeAxis />
                        <RangeBar />
                    </section>
                    <div className="h-1 shrink-0" />
                    <BottomPanel />
                </main>
                <RightRail />
            </div>
            <Taskbar />
        </div>
    );
};

export default App;
